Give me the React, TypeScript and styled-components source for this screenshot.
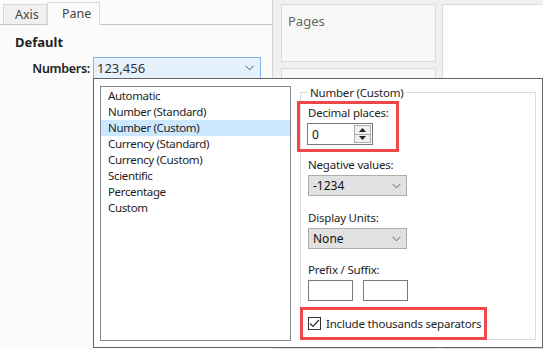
import React from 'react';
import styled, { createGlobalStyle } from 'styled-components';

const GlobalStyle = createGlobalStyle`
  html, body {
    margin: 0;
    padding: 0;
    background: #f0f0f0;
  }
  body {
    font-family: "Noto Sans", "Open Sans", sans-serif;
    color: #1e1e1e;
  }
`;

const Page = styled.div`
  position: relative;
  display: flex;
  width: 543px;
  height: 349px;
  overflow: hidden;
`;

// left side: tabs + pane settings
const LeftPanel = styled.section`
  width: 272px;
  flex: none;
  background: #fbfbfb;
  border-right: 1px solid #d4d4d4;
`;

const TabBar = styled.div`
  display: flex;
  align-items: flex-end;
  height: 24px;
  padding-left: 3px;
  border-bottom: 1px solid #c4c4c4;
`;

const Tab = styled.div<{ $active?: boolean }>`
  box-sizing: border-box;
  height: ${p => (p.$active ? '23px' : '20px')};
  margin-bottom: ${p => (p.$active ? '-1px' : '0')};
  padding: ${p => (p.$active ? '2px 0 0 14px' : '1px 0 0 11px')};
  width: ${p => (p.$active ? '53px' : '44px')};
  background: ${p => (p.$active ? '#fbfbfb' : '#f0f0f0')};
  border: 1px solid #d9d9d9;
  border-bottom: none;
  font-size: 12.5px;
  line-height: 17px;
  color: #444;
`;

const Heading = styled.h2`
  margin: 8px 0 0 15px;
  font-size: 13px;
  line-height: 18px;
  font-weight: 700;
  color: #222;
`;

const FieldRow = styled.div`
  display: flex;
  align-items: center;
  margin-top: 6px;
`;

const FieldLabel = styled.span`
  width: 90px;
  white-space: nowrap;
  text-align: right;
  font-size: 12.5px;
  font-weight: 600;
  letter-spacing: -0.3px;
  color: #222;
`;

const NumbersSelect = styled.div`
  box-sizing: border-box;
  display: flex;
  align-items: center;
  justify-content: space-between;
  width: 168px;
  height: 22px;
  margin-left: 3px;
  padding: 0 6px 0 3px;
  background: #e5f1fb;
  border: 1px solid #7eb4ea;
  font-size: 13px;
  color: #333;
`;

// right side: shelves
const Shelves = styled.section`
  flex: 1;
  display: flex;
  gap: 6px;
  padding: 4px 0 0 8px;
`;

const ShelfColumn = styled.div`
  display: flex;
  flex-direction: column;
  gap: 6px;
  width: 155px;
`;

const Shelf = styled.div<{ $h: number }>`
  box-sizing: border-box;
  height: ${p => p.$h}px;
  background: #f8f8f8;
  border: 1px solid #dadada;
  padding: 7px 0 0 6px;
  font-size: 13px;
  color: #666;
`;

const Canvas = styled.div`
  flex: 1;
  background: #fff;
  border: 1px solid #dadada;
  border-right: none;
`;

// format popup
const Popup = styled.div`
  position: absolute;
  left: 93px;
  top: 78px;
  box-sizing: border-box;
  width: 450px;
  height: 270px;
  display: flex;
  align-items: flex-start;
  padding: 7px 0 0 6px;
  background: #fff;
  border: 1px solid #646464;
`;

const FormatList = styled.ul`
  box-sizing: border-box;
  width: 191px;
  height: 255px;
  margin: 0;
  padding: 1px 0 0;
  list-style: none;
  border: 1px solid #828790;
`;

const FormatItem = styled.li<{ $selected?: boolean }>`
  height: 16px;
  padding-left: 7px;
  font-size: 11.5px;
  line-height: 16px;
  letter-spacing: -0.35px;
  color: #1e1e1e;
  background: ${p => (p.$selected ? '#cce8ff' : 'transparent')};
`;

const GroupBox = styled.fieldset`
  box-sizing: border-box;
  width: 236px;
  height: 255px;
  margin: -1px 0 0 9px;
  padding: 0 7px;
  border: 1px solid #dcdcdc;
  min-width: 0;
`;

const Legend = styled.legend`
  padding: 0 2px;
  font-size: 11.5px;
  line-height: 15px;
  letter-spacing: -0.2px;
  color: #1e1e1e;
`;

type Box = { top: number; left: number; width: number; bottom: number };

// red annotation frame drawn over a field
const Field = styled.div<{ $top: number; $box?: Box }>`
  position: relative;
  margin-top: ${p => p.$top}px;

  ${p =>
    p.$box &&
    `
    &::after {
      content: '';
      position: absolute;
      top: ${p.$box.top}px;
      left: ${p.$box.left}px;
      width: ${p.$box.width}px;
      bottom: ${p.$box.bottom}px;
      box-sizing: border-box;
      border: 3px solid #f04848;
      pointer-events: none;
    }
  `}
`;

const Label = styled.div`
  font-size: 11.5px;
  line-height: 15px;
  letter-spacing: -0.2px;
  margin-bottom: 3px;
  color: #1e1e1e;
`;

const SpinBox = styled.div`
  box-sizing: border-box;
  display: flex;
  align-items: center;
  justify-content: space-between;
  width: 66px;
  height: 22px;
  margin-left: -1px;
  padding: 0 1px 0 4px;
  border: 1px solid #7a7a7a;
  font-size: 12px;
  color: #111;
`;

const SpinButtons = styled.div`
  display: flex;
  flex-direction: column;
  width: 15px;
  height: 16px;
  border: 1px solid #adadad;
`;

const SpinButton = styled.div<{ $down?: boolean }>`
  flex: 1;
  display: flex;
  align-items: center;
  justify-content: center;
  background: #f0f0f0;
  border-top: ${p => (p.$down ? '1px solid #adadad' : 'none')};
`;

const Select = styled.div`
  box-sizing: border-box;
  display: flex;
  align-items: center;
  justify-content: space-between;
  width: 99px;
  height: 21px;
  padding: 0 5px 0 4px;
  background: #e1e1e1;
  border: 1px solid #adadad;
  font-size: 12px;
  color: #111;
`;

const InputPair = styled.div`
  display: flex;
  gap: 10px;
`;

const TextBox = styled.div`
  box-sizing: border-box;
  width: 45px;
  height: 21px;
  border: 1px solid #7a7a7a;
  background: #fff;
`;

const CheckRow = styled.div`
  display: flex;
  align-items: center;
  gap: 5px;
  height: 16px;
  font-size: 11.5px;
  letter-spacing: -0.2px;
  color: #1e1e1e;
`;

const CheckBox = styled.div`
  box-sizing: border-box;
  width: 13px;
  height: 13px;
  border: 1px solid #333;
  background: #fff;
  display: flex;
  align-items: center;
  justify-content: center;
`;

const Chevron = ({ color = '#333' }: { color?: string }) => (
  <svg width="9" height="6" viewBox="0 0 9 6">
    <polyline points="0.5,0.8 4.5,4.8 8.5,0.8" fill="none" stroke={color} strokeWidth="1" />
  </svg>
);

const Triangle = ({ down }: { down?: boolean }) => (
  <svg width="7" height="4" viewBox="0 0 7 4">
    <polygon points={down ? '0,0 7,0 3.5,4' : '0,4 7,4 3.5,0'} fill="#222" />
  </svg>
);

const formats = [
  'Automatic',
  'Number (Standard)',
  'Number (Custom)',
  'Currency (Standard)',
  'Currency (Custom)',
  'Scientific',
  'Percentage',
  'Custom',
];

export default function App() {
  return (
    <>
      <GlobalStyle />
      <Page>
        <LeftPanel>
          <TabBar>
            <Tab>Axis</Tab>
            <Tab $active>Pane</Tab>
          </TabBar>
          <Heading>Default</Heading>
          <FieldRow>
            <FieldLabel>Numbers:</FieldLabel>
            <NumbersSelect>
              123,456
              <Chevron color="#555" />
            </NumbersSelect>
          </FieldRow>
        </LeftPanel>

        <Shelves>
          <ShelfColumn>
            <Shelf $h={62}>Pages</Shelf>
            <Shelf $h={300} />
          </ShelfColumn>
          <Canvas />
        </Shelves>

        <Popup>
          <FormatList>
            {formats.map(f => (
              <FormatItem key={f} $selected={f === 'Number (Custom)'}>
                {f}
              </FormatItem>
            ))}
          </FormatList>

          <GroupBox>
            <Legend>Number (Custom)</Legend>

            <Field $top={5} $box={{ top: -4, left: -11, width: 102, bottom: -7 }}>
              <Label>Decimal places:</Label>
              <SpinBox>
                0
                <SpinButtons>
                  <SpinButton><Triangle /></SpinButton>
                  <SpinButton $down><Triangle down /></SpinButton>
                </SpinButtons>
              </SpinBox>
            </Field>

            <Field $top={12}>
              <Label>Negative values:</Label>
              <Select>
                -1234
                <Chevron color="#666" />
              </Select>
            </Field>

            <Field $top={14}>
              <Label>Display Units:</Label>
              <Select>
                None
                <Chevron color="#666" />
              </Select>
            </Field>

            <Field $top={13}>
              <Label>Prefix / Suffix:</Label>
              <InputPair>
                <TextBox />
                <TextBox />
              </InputPair>
            </Field>

            <Field $top={14} $box={{ top: -8, left: -8, width: 187, bottom: -9 }}>
              <CheckRow>
                <CheckBox>
                  <svg width="11" height="9" viewBox="0 0 11 9">
                    <polyline points="1,4.5 4,7.5 10,1" fill="none" stroke="#333" strokeWidth="1.2" />
                  </svg>
                </CheckBox>
                Include thousands separators
              </CheckRow>
            </Field>
          </GroupBox>
        </Popup>
      </Page>
    </>
  );
}
